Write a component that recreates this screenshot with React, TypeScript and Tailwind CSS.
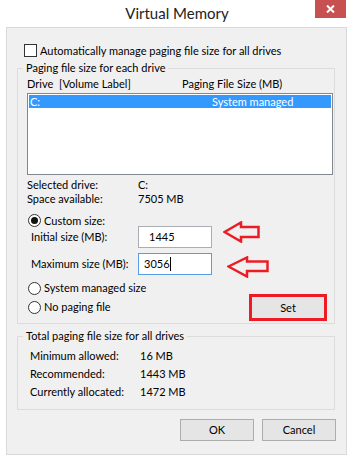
import React from 'react';

const Radio: React.FC<{ checked?: boolean }> = ({ checked }) => (
    <span className='w-[13px] h-[13px] rounded-full border border-[#333] bg-white flex items-center justify-center shrink-0'>
        {checked && <span className='w-[7px] h-[7px] rounded-full bg-[#111]' />}
    </span>
);

const Arrow: React.FC<{ w: number, h: number, points: string, className?: string }> = ({ w, h, points, className }) => (
    <svg width={w} height={h} viewBox={`0 0 ${w} ${h}`} className={className}>
        <polygon points={points} fill='none' stroke='#ed1c24' strokeWidth={2.5} strokeLinejoin='miter' />
    </svg>
);

const App: React.FC = () => {
    return (
        <div className="w-[354px] h-[461px] bg-white overflow-hidden [font-family:Lato,sans-serif] text-black whitespace-nowrap">
            {/* Title bar */}
            <div className='h-[27px] flex items-center justify-center relative'>
                <span className='text-[15px] text-[#222] mt-[-1px]'>Virtual Memory</span>
                <div className='absolute right-[8px] top-0 w-[31px] h-[18px] bg-[#c75050] flex items-center justify-center'>
                    <svg width='9' height='8' viewBox='0 0 9 8'>
                        <path d='M1 0.5 L8 7.5 M8 0.5 L1 7.5' stroke='#fff' strokeWidth='2' />
                    </svg>
                </div>
            </div>

            {/* Client area */}
            <div className='ml-[6px] w-[341px] h-[428px] border border-[#d9d9d9] bg-[#f0f0f0] text-[11px] flex flex-col'>
                <div className='mt-[16px] pl-[17px] flex items-center gap-[3px] h-[13px]'>
                    <span className='w-[13px] h-[13px] border border-[#333] bg-white shrink-0' />
                    <span className='leading-[16px]'>Automatically manage paging file size for all drives</span>
                </div>

                {/* Paging file size for each drive */}
                <fieldset className='mt-[3px] ml-[10px] w-[318px] border border-[#dcdcdc] pl-[9px] pr-[1px] pb-[2px]'>
                    <legend className='ml-[-4px] px-[3px] leading-[16px]'>Paging file size for each drive</legend>
                    <div className='flex h-[16px] leading-[16px]'>
                        <span className='w-[32px]'>Drive</span>
                        <span className='w-[123px]'>[Volume Label]</span>
                        <span>Paging File Size (MB)</span>
                    </div>
                    <div className='mt-[1px] h-[82px] w-[306px] border border-[#828790] bg-white p-[1px]'>
                        <div className='h-[13px] bg-[#3399ff] text-white flex items-center leading-[13px]'>
                            <span className='pl-[1px] w-[183px]'>C:</span>
                            <span>System managed</span>
                        </div>
                    </div>

                    <div className='mt-[3px] flex flex-col leading-[14px]'>
                        <div className='flex'><span className='w-[111px]'>Selected drive:</span><span>C:</span></div>
                        <div className='flex'><span className='w-[111px]'>Space available:</span><span>7505 MB</span></div>
                    </div>

                    <div className='mt-[9px] h-[11px] flex items-center gap-[3px] ml-[1px]'>
                        <Radio checked />
                        <span className='leading-[14px]'>Custom size:</span>
                    </div>

                    {/* Initial size */}
                    <div className='ml-[4px] flex items-start h-[22px]'>
                        <span className='w-[107px] leading-[22px]'>Initial size (MB):</span>
                        <div className='w-[74px] h-[22px] border border-[#abadb3] bg-white pl-[10px] leading-[20px]'>1445</div>
                        <Arrow w={37} h={22} className='ml-[11px] mt-[-5px]' points='1.5,11 18,1.5 18,6 35.5,6 35.5,16 18,16 18,20.5' />
                    </div>

                    {/* Maximum size */}
                    <div className='mt-[5px] ml-[4px] flex items-start h-[22px]'>
                        <span className='w-[107px] leading-[22px]'>Maximum size (MB):</span>
                        <div className='w-[74px] h-[22px] border border-[#569de5] bg-white pl-[5px] leading-[20px] flex items-center'>
                            3056<span className='w-px h-[14px] bg-black' />
                        </div>
                        <Arrow w={42} h={22} className='ml-[15px] mt-[3px]' points='1.5,10.5 20,1.5 20,5.5 40.5,5.5 40.5,15 20,15 20,20.5' />
                    </div>

                    <div className='mt-[6px] flex items-start'>
                        <div className='flex flex-col gap-[5px] ml-[1px]'>
                            <div className='h-[14px] flex items-center gap-[3px]'>
                                <Radio />
                                <span className='leading-[14px]'>System managed size</span>
                            </div>
                            <div className='h-[14px] flex items-center gap-[3px]'>
                                <Radio />
                                <span className='leading-[14px]'>No paging file</span>
                            </div>
                        </div>
                        <button className='ml-auto mr-[6px] mt-[13px] w-[78px] h-[27px] border-[3px] border-[#ed1c24] bg-[#e5e5e5] leading-[20px]'>Set</button>
                    </div>
                </fieldset>

                {/* Total paging file size */}
                <fieldset className='mt-[4px] ml-[10px] w-[318px] border border-[#dcdcdc] pl-[12px] pb-[10px]'>
                    <legend className='ml-[-7px] px-[3px] leading-[16px]'>Total paging file size for all drives</legend>
                    <div className='mt-[5px] flex flex-col gap-[4px] leading-[14px]'>
                        <div className='flex'><span className='w-[110px]'>Minimum allowed:</span><span>16 MB</span></div>
                        <div className='flex'><span className='w-[110px]'>Recommended:</span><span>1443 MB</span></div>
                        <div className='flex'><span className='w-[110px]'>Currently allocated:</span><span>1472 MB</span></div>
                    </div>
                </fieldset>

                <div className='mt-[9px] mr-[10px] flex justify-end gap-[8px]'>
                    <button className='w-[74px] h-[22px] border border-[#adadad] bg-[#e5e5e5] leading-[20px]'>OK</button>
                    <button className='w-[74px] h-[22px] border border-[#adadad] bg-[#e5e5e5] leading-[20px]'>Cancel</button>
                </div>
            </div>
        </div>
    );
};

export default App;
